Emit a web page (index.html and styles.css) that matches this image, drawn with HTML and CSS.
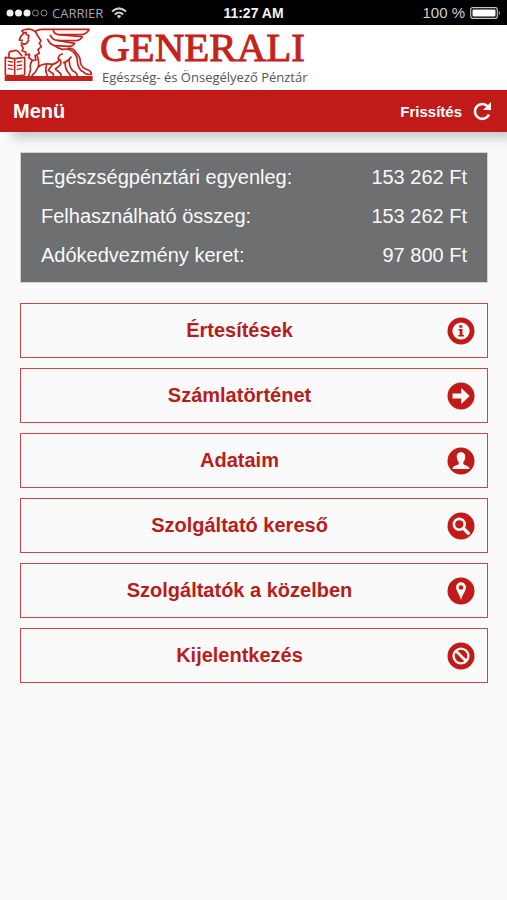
FILE: index.html
```html
<!DOCTYPE html>
<html lang="hu">
<head>
<meta charset="utf-8">
<meta name="viewport" content="width=device-width, initial-scale=1">
<title>Menü</title>
<link rel="stylesheet" href="styles.css">
</head>
<body>
<div class="status">
  <div class="status-left">
    <svg class="signal" viewBox="0 0 42 10" aria-hidden="true">
      <g fill="#f2f2f2"><circle cx="4" cy="5" r="3.5"/><circle cx="12.500" cy="5" r="3.500"/><circle cx="21" cy="5" r="3.500"/></g>
      <g fill="none" stroke="#8a8a8a"><circle cx="29.500" cy="5" r="3"/><circle cx="38" cy="5" r="3"/></g>
    </svg>
    <span class="carrier">CARRIER</span>
    <svg class="wifi" viewBox="0 0 16 12" aria-hidden="true">
      <g fill="none" stroke="#d0d0d0" stroke-width="2"><path d="M1 4.600Q8-1.800 15 4.600"/><path d="M3.800 7.400Q8 3.500 12.200 7.400"/></g>
      <path d="M5.800 9Q8 7.200 10.200 9L8 11.500z" fill="#d0d0d0"/>
    </svg>
  </div>
  <span class="clock">11:27 AM</span>
  <div class="status-right">
    <span>100 %</span>
    <svg class="battery" viewBox="0 0 31 12" aria-hidden="true">
      <rect x="0.700" y="0.700" width="26.600" height="10.600" rx="2" fill="none" stroke="#c4c4c4" stroke-width="1.200"/>
      <rect x="2.500" y="2.500" width="23" height="7" rx="1" fill="#fff"/>
      <path d="M28.800 3.500Q31 6 28.800 8.500z" fill="#c4c4c4"/>
    </svg>
  </div>
</div>

<div class="brand">
  <svg class="lion" viewBox="0 3 300 195" aria-hidden="true">
    <path d="M14 156H278V171H14z" fill="#c4231c"/>
    <g fill="none" stroke="#c4231c" stroke-width="5" stroke-linejoin="round" stroke-linecap="round">
      <path d="M16 100L44 104L74 100V153L44 156L16 153zM44 104V154"/>
      <path d="M25 112L37 114M25 123L37 125M25 134L37 136M52 114L65 112M52 125L65 123M52 136L65 134" stroke-width="4"/>
      <path d="M27 98V88Q29 80 39 82Q48 76 56 84L65 95"/>
      <path d="M66 20Q82 12 98 18Q108 22 112 34L123 50L118 58L124 68L114 77L118 88L105 95L108 108L96 110Q88 122 92 136L86 156"/>
      <path d="M66 20L71 28L62 38L58 48L67 49M64 55L70 61L80 58L86 49M78 30L87 35L84 44M70 28L79 25"/>
      <path d="M64 63L70 73L66 80L78 85L76 93L89 91L86 101L96 108"/>
      <path d="M106 22Q113 16 126 16H267Q262 28 248 31L177 32"/>
      <path d="M160 17Q160 30 177 32L247 38Q242 49 228 50L172 49Q158 48 151 34"/>
      <path d="M172 49L224 58Q218 68 207 67L164 65Q149 61 143 46"/>
      <path d="M164 65Q174 74 188 76Q208 72 220 84Q232 94 232 112Q234 132 246 142"/>
      <path d="M204 73Q221 71 228 86Q241 97 241 115Q245 132 262 137Q275 142 274 151Q258 154 248 142"/>
      <path d="M112 96Q119 117 114 130Q110 142 96 155M114 130Q128 116 158 121Q176 116 178 105Q186 113 180 124L166 135L182 149L184 155"/>
      <path d="M140 123Q134 140 142 155M158 121L145 139L160 150V155M174 104Q177 91 187 90"/>
      <path d="M190 116Q207 110 213 99M208 110Q207 128 218 140Q230 145 232 155M196 116Q194 130 202 142L212 155"/>
    </g>
  </svg>
  <div class="wordmark">
    <span class="name">GENERALI</span>
    <span class="tagline">Egészség- és Önsegélyező Pénztár</span>
  </div>
</div>

<header class="bar">
  <h1>Menü</h1>
  <button class="refresh" type="button">Frissítés
    <svg viewBox="0 0 20 20" aria-hidden="true"><path d="M15.500 5.200A7.400 7.400 0 1 0 17 13.600" fill="none" stroke="#fff" stroke-width="2.600"/><path d="M19 1V9H11z" fill="#fff"/></svg>
  </button>
</header>

<main>
  <dl class="summary">
    <div><dt>Egészségpénztári egyenleg:</dt><dd>153 262 Ft</dd></div>
    <div><dt>Felhasználható összeg:</dt><dd>153 262 Ft</dd></div>
    <div><dt>Adókedvezmény keret:</dt><dd>97 800 Ft</dd></div>
  </dl>
  <nav class="menu">
    <a href="#ertesitesek"><span>Értesítések</span>
      <svg viewBox="0 0 28 28" aria-hidden="true"><circle cx="14" cy="14" r="13.500" fill="#c21a18"/><circle cx="14" cy="14" r="8.600" fill="#fafafa"/><path d="M12.300 8.200H15.400V10.700H12.300zM11.500 12H15.500V18H17V19.600H11.300V18H12.700V13.600H11.500z" fill="#c21a18"/></svg></a>
    <a href="#szamlatortenet"><span>Számlatörténet</span>
      <svg viewBox="0 0 28 28" aria-hidden="true"><circle cx="14" cy="14" r="13.500" fill="#c21a18"/><path d="M5.500 11.400H14.200V6L22.700 14L14.200 22V16.600H5.500z" fill="#fafafa"/></svg></a>
    <a href="#adataim"><span>Adataim</span>
      <svg viewBox="0 0 28 28" aria-hidden="true"><circle cx="14" cy="14" r="13.500" fill="#c21a18"/><path d="M14 5.200C17.300 5.200 18.400 7.500 18.200 10.200C18.100 12.700 17 14 16.300 15V17C17.300 18.500 22.500 18.600 22.500 22H5.500C5.500 18.600 10.700 18.500 11.700 17V15C11 14 9.900 12.700 9.800 10.200C9.600 7.500 10.700 5.200 14 5.200z" fill="#fafafa"/></svg></a>
    <a href="#kereso"><span>Szolgáltató kereső</span>
      <svg viewBox="0 0 28 28" aria-hidden="true"><circle cx="14" cy="14" r="13.500" fill="#c21a18"/><circle cx="12.300" cy="12.300" r="5.400" fill="none" stroke="#fafafa" stroke-width="2.600"/><path d="M16.300 16.300L21.300 21.300" stroke="#fafafa" stroke-width="3.400" stroke-linecap="round"/></svg></a>
    <a href="#kozelben"><span>Szolgáltatók a közelben</span>
      <svg viewBox="0 0 28 28" aria-hidden="true"><circle cx="14" cy="14" r="13.500" fill="#c21a18"/><path d="M14 5.300A5 5 0 0 1 19 10.300C19 13.500 15.500 17.500 14 23C12.500 17.500 9 13.500 9 10.300A5 5 0 0 1 14 5.300zM14 8.200A2.300 2.300 0 1 0 14 12.800A2.300 2.300 0 1 0 14 8.200z" fill="#fafafa" fill-rule="evenodd"/></svg></a>
    <a href="#kijelentkezes"><span>Kijelentkezés</span>
      <svg viewBox="0 0 28 28" aria-hidden="true"><circle cx="14" cy="14" r="13.500" fill="#c21a18"/><circle cx="14" cy="14" r="7.400" fill="none" stroke="#fafafa" stroke-width="2.400"/><path d="M9 9L19 19" stroke="#fafafa" stroke-width="2.600"/></svg></a>
  </nav>
</main>
</body>
</html>
```
FILE: styles.css
```css
* { box-sizing: border-box; }

body {
  margin: 0;
  min-height: 100vh;
  background: #fafafa;
  font-family: "Liberation Sans", Arial, sans-serif;
}

svg { display: block; flex: none; }

.status {
  display: grid;
  grid-template-columns: 1fr auto 1fr;
  align-items: center;
  height: 25px;
  padding: 0 6px;
  background: #000;
  color: #d0d0d0;
  font-size: 14px;
}

.status-left,
.status-right {
  display: flex;
  align-items: center;
}

.status-left { gap: 4px; }
.status-right { gap: 5px; justify-content: flex-end; font-size: 15px; }
.signal { width: 42px; height: 10px; }
.carrier { font-family: "Open Sans", sans-serif; font-size: 13px; color: #a8a8a8; }
.wifi { width: 16px; height: 12px; margin-left: 4px; }
.clock { color: #f4f4f4; font-weight: bold; }
.battery { width: 31px; height: 12px; }

.brand {
  display: flex;
  height: 65px;
  background: #fff;
}

.lion { width: 100px; height: 65px; }

.wordmark {
  display: flex;
  flex-direction: column;
}

.name {
  color: #c4231c;
  font-family: "Liberation Serif", "Times New Roman", serif;
  font-size: 41px;
  line-height: 44px;
  -webkit-text-stroke: 1px #c4231c;
}

.tagline {
  padding-left: 2px;
  color: #555;
  font-family: "Open Sans", sans-serif;
  font-size: 13px;
  line-height: 16px;
}

.bar {
  display: flex;
  align-items: center;
  justify-content: space-between;
  height: 42px;
  padding: 0 15px 0 13px;
  background: #c21a18;
  box-shadow: 10px 8px 12px -2px rgba(0, 0, 0, 0.2);
  color: #fff;
}

h1 { margin: 0; font-size: 20px; line-height: 24px; }

.refresh {
  display: flex;
  align-items: center;
  gap: 10px;
  padding: 0;
  border: 0;
  background: none;
  color: #fff;
  font: bold 15px "Liberation Sans", Arial, sans-serif;
}

.refresh svg { width: 20px; height: 20px; }

main { padding: 20px 19px 20px 20px; }

.summary {
  margin: 0 0 20px;
  padding: 5px 20px 7px;
  border: 1px solid #d2d2d2;
  background: #6d6f70;
  color: #fafafa;
  font-size: 20px;
  line-height: 39px;
}

.summary div { display: flex; justify-content: space-between; }
.summary dd { margin: 0; }

.menu { display: flex; flex-direction: column; gap: 10px; }

.menu a {
  display: flex;
  align-items: center;
  height: 55px;
  padding: 0 12px 0 11px;
  border: 1px solid #cb4644;
  color: #b91c1c;
  font-size: 20px;
  font-weight: bold;
  text-align: center;
  text-decoration: none;
}

.menu span { flex: 1; }
.menu svg { width: 28px; height: 28px; }
```
